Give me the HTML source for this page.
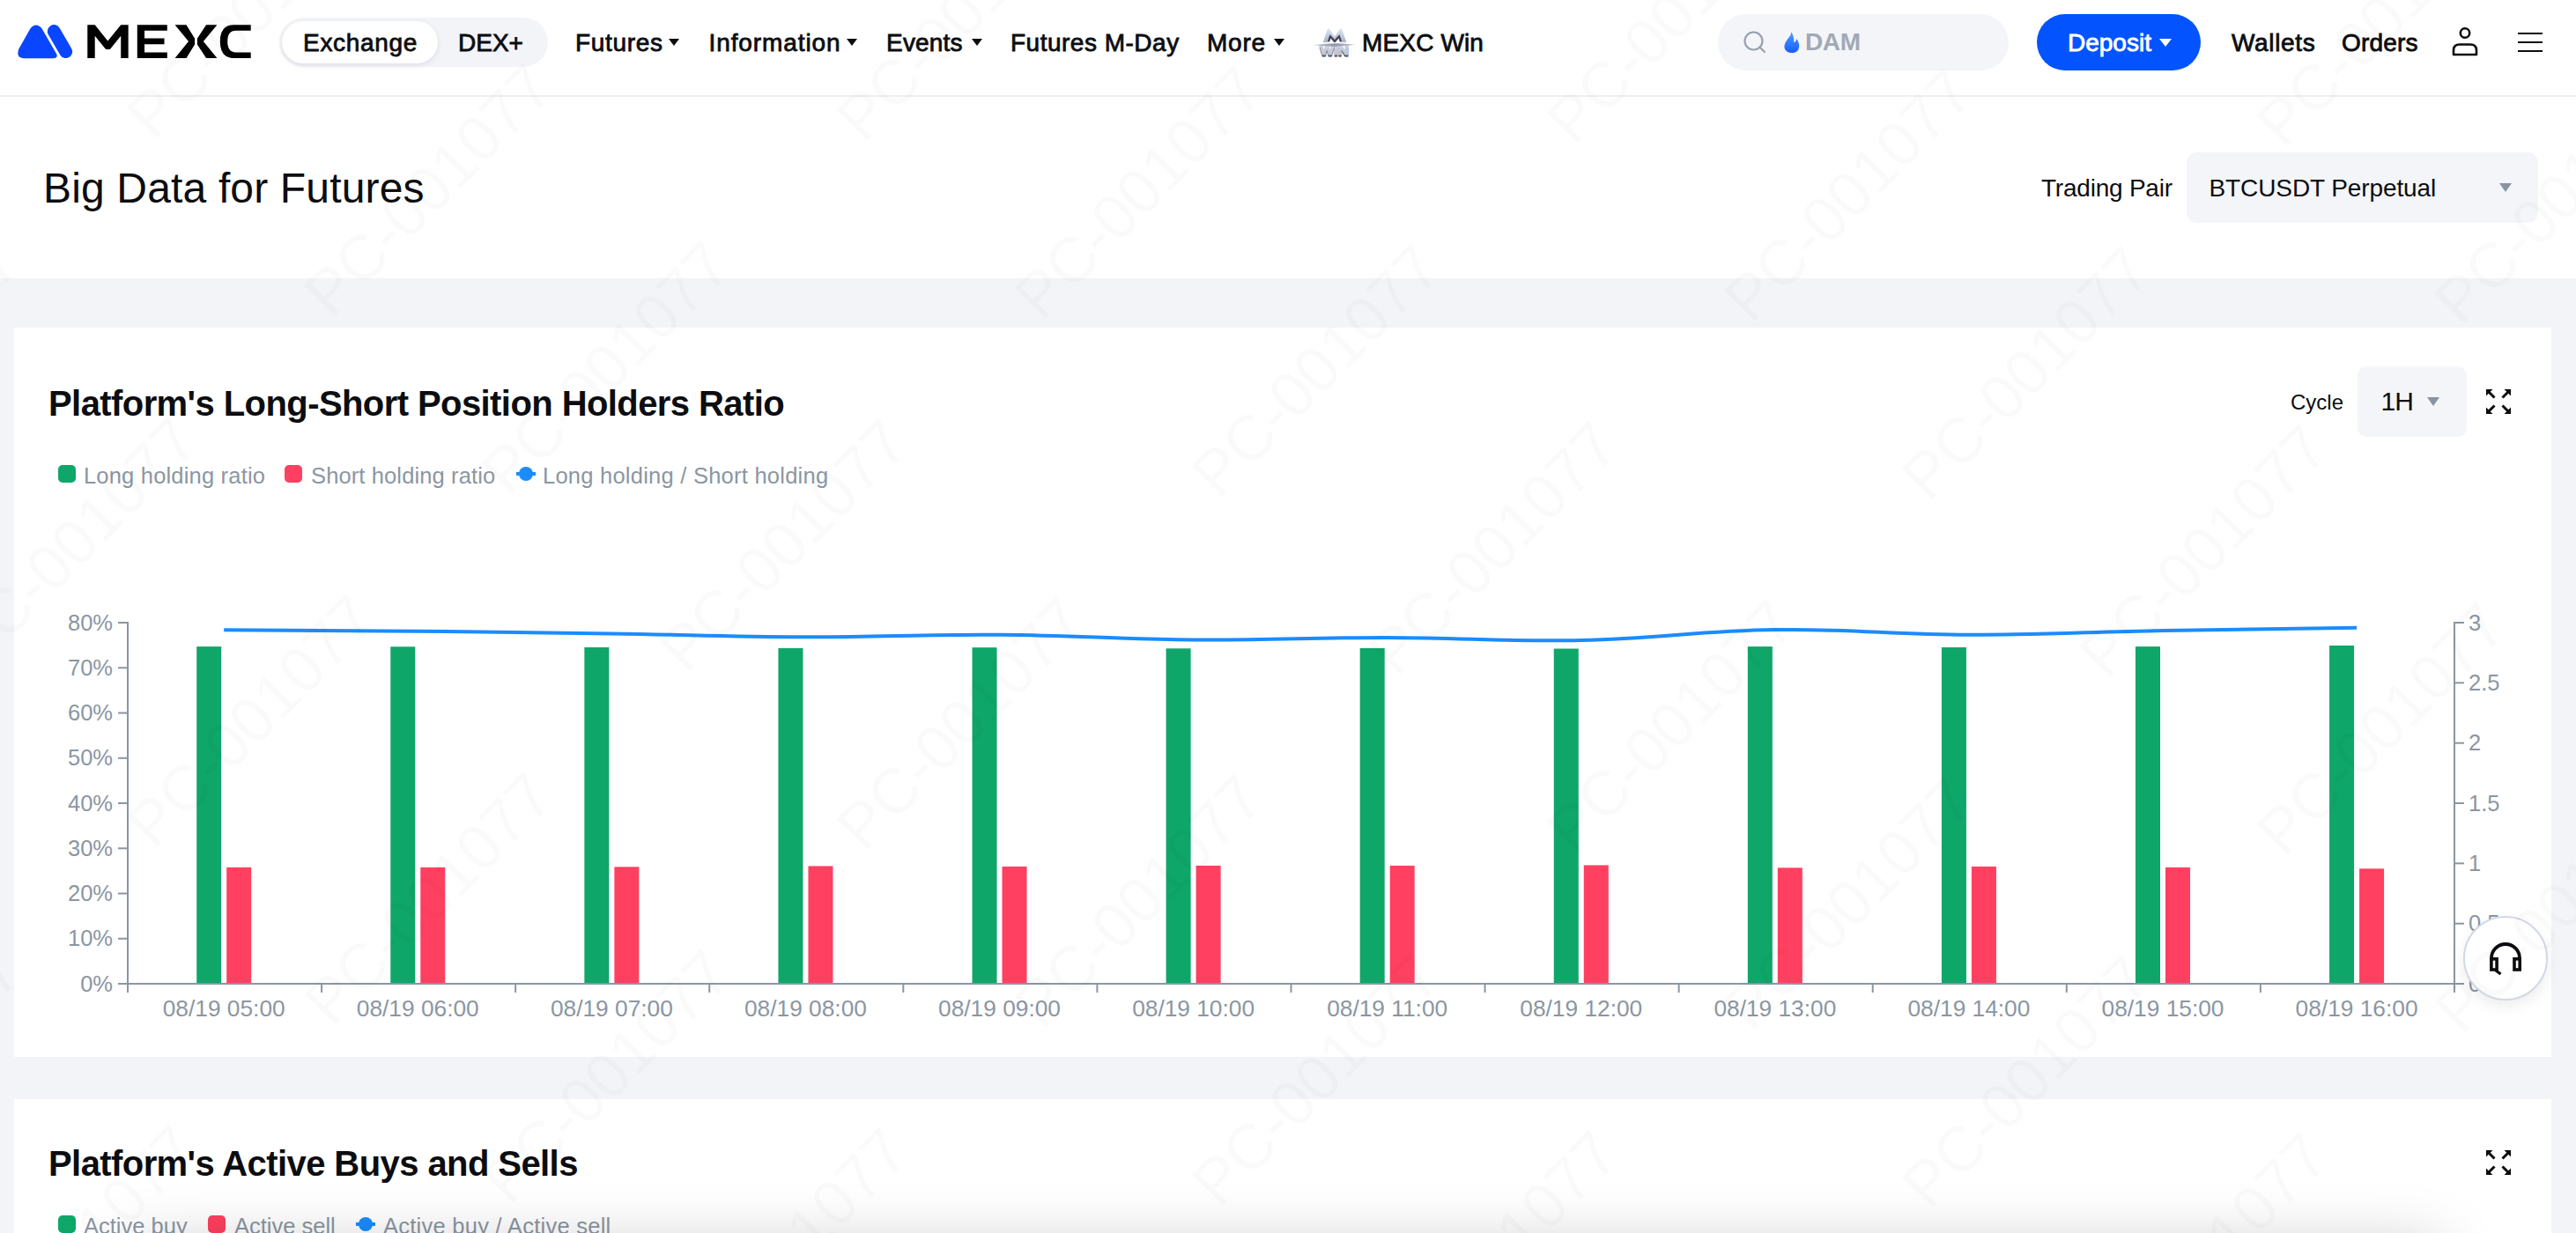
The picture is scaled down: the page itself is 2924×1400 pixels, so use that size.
<!DOCTYPE html>
<html><head><meta charset="utf-8">
<style>
html,body{margin:0;padding:0;}
body{width:2924px;height:1400px;overflow:hidden;position:relative;background:#f3f4f7;font-family:"Liberation Sans",sans-serif;color:#0c0d10;}
.a{position:absolute;white-space:nowrap;line-height:1;}
.med{-webkit-text-stroke:0.8px currentColor;}
#hdr{position:absolute;left:0;top:0;width:2924px;height:108px;background:#fff;border-bottom:2px solid #eef0f4;}
#sec{position:absolute;left:0;top:110px;width:2924px;height:206px;background:#fff;}
.card{position:absolute;left:16px;width:2880px;background:#fff;}
.nav{font-size:28px;top:35px;}
.caret{position:absolute;width:0;height:0;border-left:6.5px solid transparent;border-right:6.5px solid transparent;border-top:8px solid #0c0d10;}
.gcaret{position:absolute;width:0;height:0;border-left:7.5px solid transparent;border-right:7.5px solid transparent;border-top:10px solid #8a93a3;}
.leg{font-size:25.5px;color:#8b96a2;margin-top:2.5px;}
.sq{position:absolute;width:20px;height:20px;border-radius:5px;}
</style></head>
<body>
<div id="hdr"></div>
<div id="sec"></div>

<!-- ===== HEADER ===== -->
<!-- logo -->
<svg class="a" style="left:10px;top:20px" width="290" height="56" viewBox="0 0 2576 497">
  <path fill="#0a45ff" d="M215,112 Q275,40 335,112 L485,372 Q495,410 440,410 L150,410 Q70,405 100,318 Z"/>
  <line x1="455" y1="138" x2="575" y2="343" stroke="#0a45ff" stroke-width="132" stroke-linecap="round"/>
  <path fill="#000" d="M793,72 L868,72 L998,235 L1130,72 L1205,72 L1205,408 L1130,408 L1130,185 L1020,320 L978,320 L868,185 L868,408 L793,408 Z"/>
  <path fill="#000" d="M1295,72 L1597,72 L1597,130 L1368,130 L1368,208 L1568,208 L1568,268 L1368,268 L1368,350 L1597,350 L1597,408 L1295,408 Z"/>
  <path fill="#000" d="M1675,72 L1790,72 L1875,210 L1875,270 L1790,408 L1675,408 L1812,240 Z"/>
  <path fill="#000" d="M2100,72 L1990,72 L1900,210 L1900,270 L1990,408 L2100,408 L1962,240 Z"/>
  <path fill="#000" d="M2440,72 L2440,130 L2290,130 Q2205,130 2205,240 Q2205,350 2290,350 L2440,350 L2440,408 L2270,408 Q2130,408 2130,240 Q2130,72 2270,72 Z"/>
</svg>

<!-- exchange / dex pill -->
<div class="a" style="left:317px;top:20px;width:305px;height:56px;border-radius:28px;background:#f3f4f8;"></div>
<div class="a" style="left:320px;top:24px;width:177px;height:48px;border-radius:24px;background:#fff;box-shadow:0 2px 6px rgba(20,30,60,0.10);"></div>
<div class="a nav med" style="left:344px;letter-spacing:0.7px;">Exchange</div>
<div class="a nav med" style="left:520px;">DEX+</div>

<div class="a nav med" style="left:653px;letter-spacing:0.67px;">Futures</div><div class="caret" style="left:759px;top:44px;"></div>
<div class="a nav med" style="left:804.5px;letter-spacing:0.9px;">Information</div><div class="caret" style="left:961px;top:44px;"></div>
<div class="a nav med" style="left:1006px;letter-spacing:0.2px;">Events</div><div class="caret" style="left:1103px;top:44px;"></div>
<div class="a nav med" style="left:1147px;letter-spacing:0.5px;">Futures M-Day</div>
<div class="a nav med" style="left:1370px;letter-spacing:0.8px;">More</div><div class="caret" style="left:1446px;top:44px;"></div>
<!-- mexc win icon -->
<svg class="a" style="left:1480px;top:20px" width="80" height="56" viewBox="0 0 1761 1233">
  <defs>
    <linearGradient id="wg1" x1="0" y1="0" x2="0" y2="1"><stop offset="0" stop-color="#dfe6f2"/><stop offset="1" stop-color="#a9b2c6"/></linearGradient>
    <linearGradient id="wg2" x1="0" y1="0" x2="1" y2="0"><stop offset="0" stop-color="#c9cfdc"/><stop offset="0.5" stop-color="#8d95a8"/><stop offset="1" stop-color="#c9cfdc"/></linearGradient>
    <linearGradient id="wg3" x1="0" y1="0" x2="0" y2="1"><stop offset="0" stop-color="#e3e8f1"/><stop offset="1" stop-color="#b4bccd"/></linearGradient>
  </defs>
  <path fill="url(#wg1)" d="M480,615 L585,300 Q615,255 655,300 L770,480 L885,300 Q925,255 955,300 L1065,615 L945,615 L900,470 L800,615 L740,615 L640,470 L595,615 Z"/>
  <path fill="none" stroke="#3e4354" stroke-width="50" stroke-linejoin="miter" d="M615,605 L660,470 L770,590 L880,470 L925,605"/>
  <text x="400" y="968" font-family="Liberation Sans" font-weight="bold" font-size="330" fill="#474d5e" stroke="#474d5e" stroke-width="22" textLength="720" lengthAdjust="spacingAndGlyphs">WIN</text>
  <text x="400" y="925" font-family="Liberation Sans" font-weight="bold" font-size="330" fill="url(#wg3)" stroke="#c3cad8" stroke-width="22" textLength="720" lengthAdjust="spacingAndGlyphs">WIN</text>
  <path fill="url(#wg2)" d="M240,690 Q765,610 1290,675 Q765,755 240,690 Z"/>
</svg>
<div class="a nav med" style="left:1546px;letter-spacing:0.15px;">MEXC Win</div>

<!-- search -->
<div class="a" style="left:1950px;top:16px;width:330px;height:64px;border-radius:32px;background:#f3f5f9;"></div>
<svg class="a" style="left:1978px;top:34px" width="28" height="28" viewBox="0 0 28 28">
  <circle cx="12.5" cy="12.5" r="10" fill="none" stroke="#9aa1ae" stroke-width="2.2"/>
  <line x1="19.5" y1="19.5" x2="25" y2="25" stroke="#9aa1ae" stroke-width="2.2" stroke-linecap="round"/>
</svg>
<svg class="a" style="left:2024px;top:35px" width="20" height="26" viewBox="0 0 20 26">
  <defs><linearGradient id="fg" x1="0" y1="0" x2="0" y2="1"><stop offset="0" stop-color="#4aa0ff"/><stop offset="1" stop-color="#1a5cff"/></linearGradient></defs>
  <path fill="url(#fg)" d="M9,1 C10,6 4,9 2,15 C0,21 4,25 10,25 C16,25 19,21 18,15 C17.5,12 16,10 15,9 C15,12 13,13 12,13 C13,8 11,4 9,1 Z"/>
</svg>
<div class="a" style="left:2049px;top:34.3px;font-size:28px;font-weight:bold;color:#a1a8b6;letter-spacing:-0.4px;">DAM</div>

<!-- deposit -->
<div class="a" style="left:2312px;top:16px;width:186px;height:64px;border-radius:32px;background:#0353ff;"></div>
<div class="a nav med" style="left:2347px;color:#fff;">Deposit</div>
<div class="caret" style="left:2451px;top:44px;border-top-color:#fff;border-left-width:7.5px;border-right-width:7.5px;border-top-width:9.5px;"></div>

<div class="a nav med" style="left:2533px;letter-spacing:0.67px;">Wallets</div>
<div class="a nav med" style="left:2658px;letter-spacing:0.2px;">Orders</div>
<!-- user icon -->
<svg class="a" style="left:2780px;top:28px" width="36" height="38" viewBox="0 0 36 38">
  <circle cx="18" cy="9.5" r="5.2" fill="none" stroke="#0c0d10" stroke-width="2.6"/>
  <path d="M5,34 L5,29 Q5,22.5 12,22.5 L24,22.5 Q31,22.5 31,29 L31,34 Z" fill="none" stroke="#0c0d10" stroke-width="2.6" stroke-linejoin="round"/>
</svg>
<!-- hamburger -->
<div class="a" style="left:2858px;top:37px;width:28px;height:2.4px;background:#0c0d10;"></div>
<div class="a" style="left:2858px;top:47px;width:28px;height:2.4px;background:#0c0d10;"></div>
<div class="a" style="left:2858px;top:57px;width:28px;height:2.4px;background:#0c0d10;"></div>

<!-- ===== TITLE SECTION ===== -->
<div class="a" style="left:49px;top:189.6px;font-size:48px;letter-spacing:0.16px;">Big Data for Futures</div>
<div class="a" style="left:2317px;top:199.8px;font-size:28px;letter-spacing:-0.22px;">Trading Pair</div>
<div class="a" style="left:2482px;top:173px;width:399px;height:80px;border-radius:12px;background:#f3f5f9;"></div>
<div class="a" style="left:2507.5px;top:199.8px;font-size:28px;letter-spacing:-0.1px;">BTCUSDT Perpetual</div>
<div class="gcaret" style="left:2837px;top:208px;"></div>

<!-- ===== CARD 1 ===== -->
<div class="card" style="top:372px;height:828px;"></div>
<div class="a" style="left:55px;top:437.5px;font-size:40px;font-weight:bold;letter-spacing:-0.58px;">Platform's Long-Short Position Holders Ratio</div>
<div class="a" style="left:2600px;top:445px;font-size:24px;">Cycle</div>
<div class="a" style="left:2676px;top:416px;width:124px;height:80px;border-radius:10px;background:#f3f5f9;"></div>
<div class="a" style="left:2702.5px;top:441.2px;font-size:30px;letter-spacing:-0.9px;">1H</div>
<div class="gcaret" style="left:2755px;top:451px;"></div>
<svg class="a" style="left:2822px;top:442px" width="28" height="28" viewBox="0 0 28 28" id="fs1">
  <g fill="#0c0d10" stroke="#0c0d10">
    <path stroke="none" d="M0,0 L7.5,0 L0,7.5 Z M28,0 L20.5,0 L28,7.5 Z M0,28 L7.5,28 L0,20.5 Z M28,28 L20.5,28 L28,20.5 Z"/>
    <path fill="none" stroke-width="3" d="M2.5,2.5 L9.5,9.5 M25.5,2.5 L18.5,9.5 M2.5,25.5 L9.5,18.5 M25.5,25.5 L18.5,18.5"/>
  </g>
</svg>

<!-- legend 1 -->
<div class="sq" style="left:66px;top:528px;background:#0fa66a;"></div>
<div class="a leg" style="left:95px;top:525.2px;letter-spacing:0.19px;">Long holding ratio</div>
<div class="sq" style="left:323px;top:528px;background:#ff4060;"></div>
<div class="a leg" style="left:353px;top:525.2px;letter-spacing:0.12px;">Short holding ratio</div>
<svg class="a" style="left:586px;top:528px" width="22" height="20" viewBox="0 0 22 20">
  <line x1="0" y1="10" x2="22" y2="10" stroke="#1a8cff" stroke-width="4"/>
  <circle cx="11" cy="10" r="8" fill="#1a8cff"/>
</svg>
<div class="a leg" style="left:616px;top:525.2px;letter-spacing:0.24px;">Long holding / Short holding</div>

<!-- chart 1 -->
<svg class="a" style="left:0;top:0" width="2924" height="1400" id="chart1">
<line x1="145" y1="706" x2="145" y2="1127" stroke="#8b96a2" stroke-width="2"/>
<line x1="2786" y1="706" x2="2786" y2="1127" stroke="#8b96a2" stroke-width="2"/>
<line x1="144" y1="1117" x2="2787" y2="1117" stroke="#8b96a2" stroke-width="2"/>
<line x1="134" y1="707.00" x2="145" y2="707.00" stroke="#8b96a2" stroke-width="2"/>
<line x1="134" y1="758.25" x2="145" y2="758.25" stroke="#8b96a2" stroke-width="2"/>
<line x1="134" y1="809.50" x2="145" y2="809.50" stroke="#8b96a2" stroke-width="2"/>
<line x1="134" y1="860.75" x2="145" y2="860.75" stroke="#8b96a2" stroke-width="2"/>
<line x1="134" y1="912.00" x2="145" y2="912.00" stroke="#8b96a2" stroke-width="2"/>
<line x1="134" y1="963.25" x2="145" y2="963.25" stroke="#8b96a2" stroke-width="2"/>
<line x1="134" y1="1014.50" x2="145" y2="1014.50" stroke="#8b96a2" stroke-width="2"/>
<line x1="134" y1="1065.75" x2="145" y2="1065.75" stroke="#8b96a2" stroke-width="2"/>
<line x1="134" y1="1117.00" x2="145" y2="1117.00" stroke="#8b96a2" stroke-width="2"/>
<line x1="2786" y1="707.00" x2="2797" y2="707.00" stroke="#8b96a2" stroke-width="2"/>
<line x1="2786" y1="775.33" x2="2797" y2="775.33" stroke="#8b96a2" stroke-width="2"/>
<line x1="2786" y1="843.67" x2="2797" y2="843.67" stroke="#8b96a2" stroke-width="2"/>
<line x1="2786" y1="912.00" x2="2797" y2="912.00" stroke="#8b96a2" stroke-width="2"/>
<line x1="2786" y1="980.33" x2="2797" y2="980.33" stroke="#8b96a2" stroke-width="2"/>
<line x1="2786" y1="1048.67" x2="2797" y2="1048.67" stroke="#8b96a2" stroke-width="2"/>
<line x1="2786" y1="1117.00" x2="2797" y2="1117.00" stroke="#8b96a2" stroke-width="2"/>
<line x1="145.00" y1="1117" x2="145.00" y2="1127" stroke="#8b96a2" stroke-width="2"/>
<line x1="365.08" y1="1117" x2="365.08" y2="1127" stroke="#8b96a2" stroke-width="2"/>
<line x1="585.16" y1="1117" x2="585.16" y2="1127" stroke="#8b96a2" stroke-width="2"/>
<line x1="805.24" y1="1117" x2="805.24" y2="1127" stroke="#8b96a2" stroke-width="2"/>
<line x1="1025.32" y1="1117" x2="1025.32" y2="1127" stroke="#8b96a2" stroke-width="2"/>
<line x1="1245.40" y1="1117" x2="1245.40" y2="1127" stroke="#8b96a2" stroke-width="2"/>
<line x1="1465.48" y1="1117" x2="1465.48" y2="1127" stroke="#8b96a2" stroke-width="2"/>
<line x1="1685.56" y1="1117" x2="1685.56" y2="1127" stroke="#8b96a2" stroke-width="2"/>
<line x1="1905.64" y1="1117" x2="1905.64" y2="1127" stroke="#8b96a2" stroke-width="2"/>
<line x1="2125.72" y1="1117" x2="2125.72" y2="1127" stroke="#8b96a2" stroke-width="2"/>
<line x1="2345.80" y1="1117" x2="2345.80" y2="1127" stroke="#8b96a2" stroke-width="2"/>
<line x1="2565.88" y1="1117" x2="2565.88" y2="1127" stroke="#8b96a2" stroke-width="2"/>
<line x1="2785.96" y1="1117" x2="2785.96" y2="1127" stroke="#8b96a2" stroke-width="2"/>
<rect x="223.20" y="734.1" width="28" height="381.9" fill="#0fa66a"/>
<rect x="257.20" y="984.8" width="28" height="131.2" fill="#ff4060"/>
<rect x="443.28" y="734.3" width="28" height="381.7" fill="#0fa66a"/>
<rect x="477.28" y="984.8" width="28" height="131.2" fill="#ff4060"/>
<rect x="663.36" y="735" width="28" height="381.0" fill="#0fa66a"/>
<rect x="697.36" y="984.3" width="28" height="131.7" fill="#ff4060"/>
<rect x="883.44" y="735.9" width="28" height="380.1" fill="#0fa66a"/>
<rect x="917.44" y="983.4" width="28" height="132.6" fill="#ff4060"/>
<rect x="1103.52" y="735.2" width="28" height="380.8" fill="#0fa66a"/>
<rect x="1137.52" y="983.9" width="28" height="132.1" fill="#ff4060"/>
<rect x="1323.60" y="736.3" width="28" height="379.7" fill="#0fa66a"/>
<rect x="1357.60" y="982.9" width="28" height="133.1" fill="#ff4060"/>
<rect x="1543.68" y="735.9" width="28" height="380.1" fill="#0fa66a"/>
<rect x="1577.68" y="982.9" width="28" height="133.1" fill="#ff4060"/>
<rect x="1763.76" y="736.5" width="28" height="379.5" fill="#0fa66a"/>
<rect x="1797.76" y="982.4" width="28" height="133.6" fill="#ff4060"/>
<rect x="1983.84" y="734.1" width="28" height="381.9" fill="#0fa66a"/>
<rect x="2017.84" y="985.3" width="28" height="130.7" fill="#ff4060"/>
<rect x="2203.92" y="735" width="28" height="381.0" fill="#0fa66a"/>
<rect x="2237.92" y="983.9" width="28" height="132.1" fill="#ff4060"/>
<rect x="2424.00" y="734.1" width="28" height="381.9" fill="#0fa66a"/>
<rect x="2458.00" y="984.8" width="28" height="131.2" fill="#ff4060"/>
<rect x="2644.08" y="733" width="28" height="383.0" fill="#0fa66a"/>
<rect x="2678.08" y="986.3" width="28" height="129.7" fill="#ff4060"/>
<path d="M254.2,715.2 C298.2,715.50 386.2,715.84 474.28,716.7 C562.3,717.56 606.3,718.18 694.36,719.5 C782.4,720.82 826.4,723.06 914.44,723.3 C1002.5,723.54 1046.5,720.06 1134.52,720.7 C1222.6,721.34 1266.6,725.86 1354.6,726.5 C1442.6,727.14 1486.6,723.80 1574.68,723.9 C1662.7,724.00 1706.7,728.78 1794.76,727 C1882.8,725.22 1926.8,716.26 2014.84,715 C2102.9,713.74 2146.9,720.50 2234.92,720.7 C2323.0,720.90 2367.0,717.58 2455.0,716 C2543.0,714.42 2631.1,713.44 2675.08,712.8" fill="none" stroke="#1a8cff" stroke-width="4" stroke-linejoin="round"/>
<text x="128" y="715.6" text-anchor="end" font-family="Liberation Sans" font-size="25.5" fill="#8b96a2">80%</text>
<text x="128" y="766.9" text-anchor="end" font-family="Liberation Sans" font-size="25.5" fill="#8b96a2">70%</text>
<text x="128" y="818.1" text-anchor="end" font-family="Liberation Sans" font-size="25.5" fill="#8b96a2">60%</text>
<text x="128" y="869.4" text-anchor="end" font-family="Liberation Sans" font-size="25.5" fill="#8b96a2">50%</text>
<text x="128" y="920.6" text-anchor="end" font-family="Liberation Sans" font-size="25.5" fill="#8b96a2">40%</text>
<text x="128" y="971.9" text-anchor="end" font-family="Liberation Sans" font-size="25.5" fill="#8b96a2">30%</text>
<text x="128" y="1023.1" text-anchor="end" font-family="Liberation Sans" font-size="25.5" fill="#8b96a2">20%</text>
<text x="128" y="1074.3" text-anchor="end" font-family="Liberation Sans" font-size="25.5" fill="#8b96a2">10%</text>
<text x="128" y="1125.6" text-anchor="end" font-family="Liberation Sans" font-size="25.5" fill="#8b96a2">0%</text>
<text x="2802" y="715.6" font-family="Liberation Sans" font-size="25.5" fill="#8b96a2">3</text>
<text x="2802" y="783.9" font-family="Liberation Sans" font-size="25.5" fill="#8b96a2">2.5</text>
<text x="2802" y="852.3" font-family="Liberation Sans" font-size="25.5" fill="#8b96a2">2</text>
<text x="2802" y="920.6" font-family="Liberation Sans" font-size="25.5" fill="#8b96a2">1.5</text>
<text x="2802" y="988.9" font-family="Liberation Sans" font-size="25.5" fill="#8b96a2">1</text>
<text x="2802" y="1057.3" font-family="Liberation Sans" font-size="25.5" fill="#8b96a2">0.5</text>
<text x="2802" y="1125.6" font-family="Liberation Sans" font-size="25.5" fill="#8b96a2">0</text>
<text x="254.20" y="1154.2" text-anchor="middle" font-family="Liberation Sans" font-size="26.3" fill="#8b96a2">08/19 05:00</text>
<text x="474.28" y="1154.2" text-anchor="middle" font-family="Liberation Sans" font-size="26.3" fill="#8b96a2">08/19 06:00</text>
<text x="694.36" y="1154.2" text-anchor="middle" font-family="Liberation Sans" font-size="26.3" fill="#8b96a2">08/19 07:00</text>
<text x="914.44" y="1154.2" text-anchor="middle" font-family="Liberation Sans" font-size="26.3" fill="#8b96a2">08/19 08:00</text>
<text x="1134.52" y="1154.2" text-anchor="middle" font-family="Liberation Sans" font-size="26.3" fill="#8b96a2">08/19 09:00</text>
<text x="1354.60" y="1154.2" text-anchor="middle" font-family="Liberation Sans" font-size="26.3" fill="#8b96a2">08/19 10:00</text>
<text x="1574.68" y="1154.2" text-anchor="middle" font-family="Liberation Sans" font-size="26.3" fill="#8b96a2">08/19 11:00</text>
<text x="1794.76" y="1154.2" text-anchor="middle" font-family="Liberation Sans" font-size="26.3" fill="#8b96a2">08/19 12:00</text>
<text x="2014.84" y="1154.2" text-anchor="middle" font-family="Liberation Sans" font-size="26.3" fill="#8b96a2">08/19 13:00</text>
<text x="2234.92" y="1154.2" text-anchor="middle" font-family="Liberation Sans" font-size="26.3" fill="#8b96a2">08/19 14:00</text>
<text x="2455.00" y="1154.2" text-anchor="middle" font-family="Liberation Sans" font-size="26.3" fill="#8b96a2">08/19 15:00</text>
<text x="2675.08" y="1154.2" text-anchor="middle" font-family="Liberation Sans" font-size="26.3" fill="#8b96a2">08/19 16:00</text>
</svg>

<!-- ===== CARD 2 ===== -->
<div class="card" style="top:1248px;height:152px;"></div>
<div class="a" style="left:55px;top:1301.4px;font-size:40px;font-weight:bold;letter-spacing:-0.58px;">Platform's Active Buys and Sells</div>
<svg class="a" style="left:2822px;top:1306px" width="28" height="28" viewBox="0 0 28 28">
  <g fill="#0c0d10" stroke="#0c0d10">
    <path stroke="none" d="M0,0 L7.5,0 L0,7.5 Z M28,0 L20.5,0 L28,7.5 Z M0,28 L7.5,28 L0,20.5 Z M28,28 L20.5,28 L28,20.5 Z"/>
    <path fill="none" stroke-width="3" d="M2.5,2.5 L9.5,9.5 M25.5,2.5 L18.5,9.5 M2.5,25.5 L9.5,18.5 M25.5,25.5 L18.5,18.5"/>
  </g>
</svg>
<div class="sq" style="left:66px;top:1380px;background:#0fa66a;"></div>
<div class="a leg" style="left:95px;top:1377.2px;">Active buy</div>
<div class="sq" style="left:236px;top:1380px;background:#ff4060;"></div>
<div class="a leg" style="left:266px;top:1377.2px;">Active sell</div>
<svg class="a" style="left:404px;top:1380px" width="22" height="20" viewBox="0 0 22 20">
  <line x1="0" y1="10" x2="22" y2="10" stroke="#1a8cff" stroke-width="4"/>
  <circle cx="11" cy="10" r="8" fill="#1a8cff"/>
</svg>
<div class="a leg" style="left:435px;top:1377.2px;letter-spacing:0.26px;">Active buy / Active sell</div>

<!-- bottom shadow -->
<div class="a" style="left:150px;top:1415px;width:2620px;height:100px;background:#000;box-shadow:0 0 70px 0 rgba(0,0,0,0.22);"></div>
<!-- support button -->
<div class="a" style="left:2796px;top:1040px;width:92px;height:92px;border-radius:50%;background:#fff;border:2px solid #d2d8e5;box-shadow:0 6px 16px rgba(0,0,0,0.08);"></div>
<svg class="a" style="left:2822px;top:1066px" width="44" height="44" viewBox="0 0 44 44">
  <path d="M6,24 L6,22 A16,16 0 0 1 38,22 L38,24" fill="none" stroke="#0c0d10" stroke-width="3.8"/>
  <rect x="5.9" y="22.8" width="6.2" height="12.2" fill="none" stroke="#0c0d10" stroke-width="3.6"/>
  <rect x="32" y="22.8" width="6.2" height="12.2" fill="none" stroke="#0c0d10" stroke-width="3.6"/>
  <line x1="10.5" y1="35.5" x2="16.5" y2="40" stroke="#0c0d10" stroke-width="3.4"/>
</svg>
<svg class="a" id="wm" style="left:0;top:0;pointer-events:none" width="2924" height="1400"><g font-family="Liberation Sans" font-size="72" fill="rgba(0,0,0,0.018)"><text transform="translate(-27.2,-40.6) rotate(-45.5)">PC-001077</text><text transform="translate(778.8,-37.7) rotate(-45.5)">PC-001077</text><text transform="translate(1584.8,-34.8) rotate(-45.5)">PC-001077</text><text transform="translate(2390.8,-31.9) rotate(-45.5)">PC-001077</text><text transform="translate(174.4,161.3) rotate(-45.5)">PC-001077</text><text transform="translate(980.4,164.2) rotate(-45.5)">PC-001077</text><text transform="translate(1786.4,167.1) rotate(-45.5)">PC-001077</text><text transform="translate(2592.4,170.0) rotate(-45.5)">PC-001077</text><text transform="translate(376.0,363.2) rotate(-45.5)">PC-001077</text><text transform="translate(1182.0,366.1) rotate(-45.5)">PC-001077</text><text transform="translate(1988.0,369.0) rotate(-45.5)">PC-001077</text><text transform="translate(2794.0,371.9) rotate(-45.5)">PC-001077</text><text transform="translate(-228.4,562.2) rotate(-45.5)">PC-001077</text><text transform="translate(577.6,565.1) rotate(-45.5)">PC-001077</text><text transform="translate(1383.6,568.0) rotate(-45.5)">PC-001077</text><text transform="translate(2189.6,570.9) rotate(-45.5)">PC-001077</text><text transform="translate(-26.8,764.1) rotate(-45.5)">PC-001077</text><text transform="translate(779.2,767.0) rotate(-45.5)">PC-001077</text><text transform="translate(1585.2,769.9) rotate(-45.5)">PC-001077</text><text transform="translate(2391.2,772.8) rotate(-45.5)">PC-001077</text><text transform="translate(174.8,966.0) rotate(-45.5)">PC-001077</text><text transform="translate(980.8,968.9) rotate(-45.5)">PC-001077</text><text transform="translate(1786.8,971.8) rotate(-45.5)">PC-001077</text><text transform="translate(2592.8,974.7) rotate(-45.5)">PC-001077</text><text transform="translate(376.4,1167.9) rotate(-45.5)">PC-001077</text><text transform="translate(1182.4,1170.8) rotate(-45.5)">PC-001077</text><text transform="translate(1988.4,1173.7) rotate(-45.5)">PC-001077</text><text transform="translate(2794.4,1176.6) rotate(-45.5)">PC-001077</text><text transform="translate(-228.0,1366.9) rotate(-45.5)">PC-001077</text><text transform="translate(578.0,1369.8) rotate(-45.5)">PC-001077</text><text transform="translate(1384.0,1372.7) rotate(-45.5)">PC-001077</text><text transform="translate(2190.0,1375.6) rotate(-45.5)">PC-001077</text><text transform="translate(-26.4,1568.8) rotate(-45.5)">PC-001077</text><text transform="translate(779.6,1571.7) rotate(-45.5)">PC-001077</text><text transform="translate(1585.6,1574.6) rotate(-45.5)">PC-001077</text><text transform="translate(2391.6,1577.5) rotate(-45.5)">PC-001077</text></g></svg>
</body></html>
